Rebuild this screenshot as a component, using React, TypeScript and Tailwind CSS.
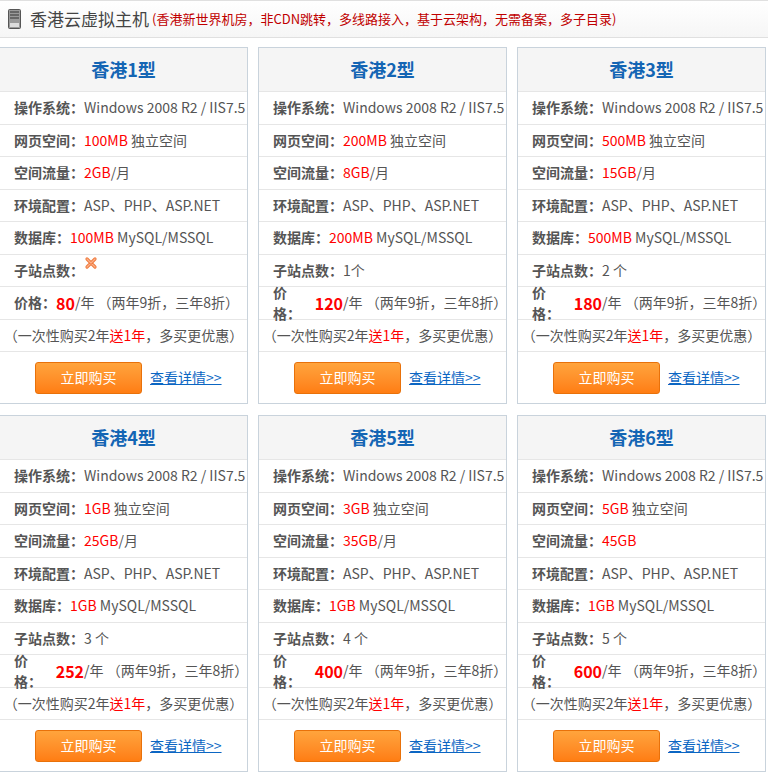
import React from 'react';

type Plan = { name: string; web: string; flow: string; db: string; sites: string | null; price: string };

const plans: Plan[] = [
  { name: '香港1型', web: '100MB', flow: '2GB', db: '100MB', sites: null, price: '80' },
  { name: '香港2型', web: '200MB', flow: '8GB', db: '200MB', sites: '1个', price: '120' },
  { name: '香港3型', web: '500MB', flow: '15GB', db: '500MB', sites: '2 个', price: '180' },
  { name: '香港4型', web: '1GB', flow: '25GB', db: '1GB', sites: '3 个', price: '252' },
  { name: '香港5型', web: '3GB', flow: '35GB', db: '1GB', sites: '4 个', price: '400' },
  { name: '香港6型', web: '5GB', flow: '45GB', db: '1GB', sites: '5 个', price: '600' },
];

const Row = ({ children, center }: { children: React.ReactNode; center?: boolean }) => (
  <div className={`h-[32.5px] flex items-center border-b border-[#e6e6e6] ${center ? 'justify-center' : 'pl-[14px]'}`}>
    {children}
  </div>
);

const L = ({ children }: { children: React.ReactNode }) => <b className="font-bold">{children}</b>;
const R = ({ children }: { children: React.ReactNode }) => <span className="text-[#ff0000]">{children}</span>;

const Card = ({ p }: { p: Plan }) => {
  const flowUnit = p.name === '香港6型' ? '' : p.name === '香港5型' ? '/月' : ' /月';
  return (
    <div className="w-[249px] border border-[#c9d3dc] bg-white">
      <div className="h-[44px] flex items-center justify-center bg-[#f5f5f5] border-b border-[#e6e6e6] text-[18px] font-bold text-[#1465b4]">
        {p.name}
      </div>
      <Row><L>操作系统：</L>Windows 2008 R2 / IIS7.5</Row>
      <Row><L>网页空间：</L><R>{p.web}</R>&nbsp;独立空间</Row>
      <Row><L>空间流量：</L><R>{p.flow}</R>{flowUnit}</Row>
      <Row><L>环境配置：</L>ASP、PHP、ASP.NET</Row>
      <Row><L>数据库：</L><R>{p.db}</R>&nbsp;MySQL/MSSQL</Row>
      <Row>
        <L>子站点数：</L>
        {p.sites ?? (
          <svg width="14" height="14" viewBox="0 0 14 14" className="-mt-[14px]">
            <path d="M3 3L11 11M11 3L3 11" stroke="#f07a3c" strokeWidth="3.2" strokeLinecap="round" />
            <path d="M3 3L11 11M11 3L3 11" stroke="#fbb08a" strokeWidth="1.2" strokeLinecap="round" />
          </svg>
        )}
      </Row>
      <Row>
        <L>价格：</L>
        <span className="text-[#ff0000] font-bold text-[16px]">{p.price}</span>/年 （两年9折，三年8折）
      </Row>
      <Row center>（一次性购买2年<R>送1年</R>，多买更优惠）</Row>
      <div className="h-[51px] flex items-center pl-[35px] gap-[8px]">
        <button className="w-[107px] h-[32px] rounded-[3px] border border-[#e8710a] bg-gradient-to-b from-[#ffa43c] to-[#ff7d12] text-white text-[14px]">
          立即购买
        </button>
        <a className="text-[#0b66c3] underline text-[14px]">查看详情&gt;&gt;</a>
      </div>
    </div>
  );
};

export default function App() {
  return (
    <div className="w-[768px] h-[772px] bg-white overflow-hidden text-[14px] text-[#555]" style={{ fontFamily: '"Noto Sans CJK SC", "Noto Sans", sans-serif' }}>
      <div className="h-[38px] flex items-center pl-[8px] border-t border-b border-[#e0e0e0] bg-gradient-to-b from-white to-[#f6f6f6]">
        <svg width="13" height="20" viewBox="0 0 13 20">
          <rect x="0.5" y="0.5" width="12" height="19" rx="1" fill="#9a9a9a" stroke="#555" />
          <rect x="2" y="2" width="9" height="2" fill="#666" />
          <rect x="2" y="5" width="9" height="2" fill="#666" />
          <rect x="2" y="8" width="9" height="2" fill="#666" />
          <rect x="2" y="14" width="9" height="4" fill="#ddd" />
        </svg>
        <span className="ml-[9px] text-[17px] text-[#444]">香港云虚拟主机</span>
        <span className="ml-[3px] text-[13px] text-[#c00000]">(香港新世界机房，非CDN跳转，多线路接入，基于云架构，无需备案，多子目录)</span>
      </div>
      <div className="grid grid-cols-[249px_249px_249px] gap-x-[10px] gap-y-[11px] mt-[9px] -ml-[1px]">
        {plans.map((p) => <Card key={p.name} p={p} />)}
      </div>
    </div>
  );
}
